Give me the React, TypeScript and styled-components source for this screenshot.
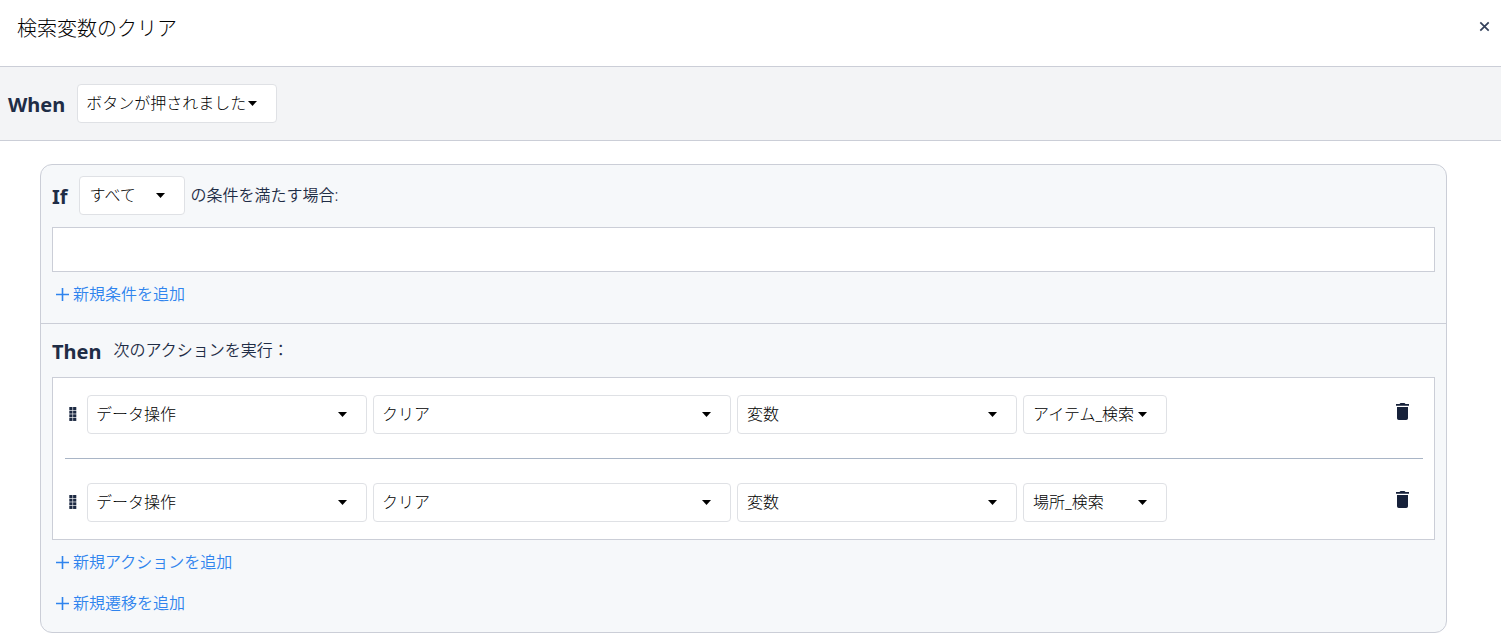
import React from 'react';
import styled, { createGlobalStyle } from 'styled-components';

const GlobalStyle = createGlobalStyle`
  *, *::before, *::after { box-sizing: border-box; }
  body {
    margin: 0;
    background: #fff;
    color: #1f2d46;
    font-family: "Noto Sans", "Noto Sans CJK JP", sans-serif;
    font-size: 16px;
    font-weight: 350;
    line-height: 24px;
  }
  button, select, input {
    font: inherit;
  }
`;

const Header = styled.header`
  display: flex;
  justify-content: space-between;
  align-items: flex-start;
  height: 66px;
  padding: 12px 10px 0 17px;
`;

const Title = styled.h1`
  margin: 0;
  color: #000;
  font-size: 20px;
  font-weight: 300;
  line-height: 34px;
`;

const IconButton = styled.button`
  display: flex;
  padding: 0;
  border: 0;
  background: none;
  color: #16213a;
  cursor: pointer;
`;

const CloseButton = styled(IconButton)`
  margin-top: 8px;
  color: #33405a;
`;

const WhenBar = styled.section`
  display: flex;
  align-items: center;
  gap: 12px;
  padding: 17px 8px;
  border: solid #cbced7;
  border-width: 1px 0;
  background: #f3f4f6;
`;

const Keyword = styled.h2`
  margin: 0;
  padding-top: 2px;
  font-size: 20px;
  font-weight: 700;
  line-height: 28px;
`;

const Card = styled.main`
  margin: 23px 54px 6px 40px;
  border: 1px solid #cbced7;
  border-radius: 12px;
  background: #f6f8fa;
`;

const Section = styled.section`
  padding: 11px 11px 17px;

  & + & {
    border-top: 1px solid #cbced7;
  }
`;

const SectionHead = styled.div`
  display: flex;
  align-items: center;
  gap: 6px;
  min-height: 39px;
`;

const IfLabel = styled.div`
  display: flex;
  align-items: center;
  gap: 11px;
`;

const ThenHead = styled(SectionHead)`
  gap: 12px;
  min-height: 32px;
  margin-bottom: 10px;
`;

const HeadText = styled.span`
  padding-bottom: 2px;
`;

const ConditionBox = styled.div`
  height: 45px;
  margin-top: 12px;
  border: 1px solid #cbced7;
  background: #fff;
`;

const ActionList = styled.ul`
  margin: 0;
  padding: 0 11px 0 12px;
  border: 1px solid #cbced7;
  background: #fff;
  list-style: none;
`;

const ActionItem = styled.li`
  display: flex;
  align-items: center;
  gap: 6px;
  padding: 17px 14px 24px 4px;

  & + & {
    padding-top: 24px;
    padding-bottom: 17px;
    border-top: 1px solid #a9b5c6;
  }
`;

const DragHandle = styled(IconButton)`
  width: 12px;
  margin-bottom: 1px;
  cursor: grab;
`;

const DeleteButton = styled(IconButton)`
  margin: 0 0 6px auto;
`;

const SelectFrame = styled.span<{ $width: number }>`
  position: relative;
  display: block;
  width: ${({ $width }) => $width}px;
  min-width: 0;
`;

const SelectControl = styled.select<{ $inset: number }>`
  appearance: none;
  display: block;
  width: 100%;
  height: 39px;
  margin: 0;
  padding: 0 24px 2px ${({ $inset }) => $inset}px;
  border: 1px solid #dfe1e5;
  border-radius: 4px;
  background: #fff;
  color: #000;
  font-weight: 300;
`;

const Caret = styled.svg`
  position: absolute;
  top: 17px;
  right: 20px;
  pointer-events: none;
`;

const AddLink = styled.button`
  display: flex;
  align-items: center;
  gap: 4px;
  margin-top: 17px;
  padding: 0 0 0 3px;
  border: 0;
  background: none;
  color: #2f84ee;
  line-height: 24px;
  cursor: pointer;

  ${ConditionBox} + &, ${ActionList} + & {
    margin-top: 10px;
  }
`;

type DropdownProps = { label: string; value: string; width: number; inset?: number };

function Dropdown({ label, value, width, inset = 8 }: DropdownProps) {
  return (
    <SelectFrame $width={width}>
      <SelectControl aria-label={label} defaultValue={value} $inset={inset}>
        <option value={value}>{value}</option>
      </SelectControl>
      <Caret width="9" height="5" viewBox="0 0 9 5" aria-hidden="true">
        <path d="M0 0h9L4.5 5z" fill="#000" />
      </Caret>
    </SelectFrame>
  );
}

function AddButton({ children }: { children: React.ReactNode }) {
  return (
    <AddLink type="button">
      <svg width="14" height="14" viewBox="0 0 14 14" aria-hidden="true">
        <path d="M7.5 1v13M1 7.5h13" stroke="currentColor" strokeWidth="1.6" />
      </svg>
      {children}
    </AddLink>
  );
}

function Action({ target }: { target: string }) {
  return (
    <ActionItem>
      <DragHandle type="button" aria-label="並べ替え">
        <svg width="8" height="14" viewBox="0 0 8 14" fill="#1c2942" aria-hidden="true">
          {[0, 3.65, 7.3, 10.95].map((y) => (
            <g key={y}>
              <rect x="0.3" y={y} width="3.2" height="3" />
              <rect x="4.1" y={y} width="3.2" height="3" />
            </g>
          ))}
        </svg>
      </DragHandle>
      <Dropdown label="アクションの種類" value="データ操作" width={280} />
      <Dropdown label="操作" value="クリア" width={358} />
      <Dropdown label="対象の種類" value="変数" width={280} inset={9} />
      <Dropdown label="対象" value={target} width={144} inset={9} />
      <DeleteButton type="button" aria-label="削除">
        <svg width="13" height="17" viewBox="0 0 13 17" fill="currentColor" aria-hidden="true">
          <path d="M0 1h3.5l1-1h4l1 1H13v1.8H0zM1 4h11v11.2A1.8 1.8 0 0 1 10.2 17H2.8A1.8 1.8 0 0 1 1 15.200z" />
        </svg>
      </DeleteButton>
    </ActionItem>
  );
}

export default function App() {
  return (
    <>
      <GlobalStyle />
      <Header>
        <Title>検索変数のクリア</Title>
        <CloseButton type="button" aria-label="閉じる">
          <svg width="13" height="13" viewBox="0 0 13 13" aria-hidden="true">
            <path d="M2.300 2.300l8.400 8.400M10.700 2.300l-8.400 8.400" stroke="currentColor" strokeWidth="1.700" />
          </svg>
        </CloseButton>
      </Header>
      <WhenBar>
        <Keyword>When</Keyword>
        <Dropdown label="イベント" value="ボタンが押されました" width={200} />
      </WhenBar>
      <Card>
        <Section>
          <SectionHead>
            <IfLabel>
              <Keyword>If</Keyword>
              <Dropdown label="条件の一致" value="すべて" width={106} inset={10} />
            </IfLabel>
            <HeadText>の条件を満たす場合:</HeadText>
          </SectionHead>
          <ConditionBox />
          <AddButton>新規条件を追加</AddButton>
        </Section>
        <Section>
          <ThenHead>
            <Keyword>Then</Keyword>
            <HeadText>次のアクションを実行：</HeadText>
          </ThenHead>
          <ActionList>
            <Action target="アイテム_検索" />
            <Action target="場所_検索" />
          </ActionList>
          <AddButton>新規アクションを追加</AddButton>
          <AddButton>新規遷移を追加</AddButton>
        </Section>
      </Card>
    </>
  );
}
